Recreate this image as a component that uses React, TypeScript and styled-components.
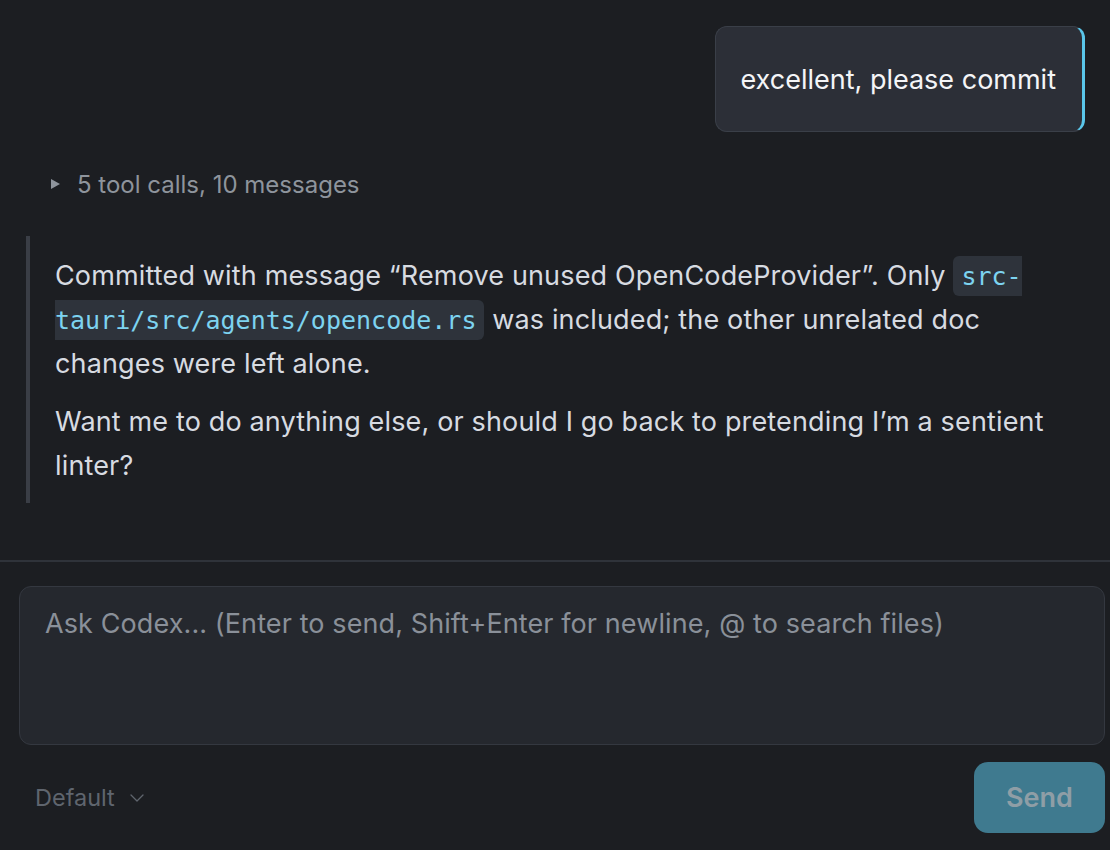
import React from 'react';
import styled, { createGlobalStyle } from 'styled-components';
import { ChevronDown } from 'lucide-react';

const GlobalStyle = createGlobalStyle`
  html, body { margin: 0; padding: 0; background: #1c1e22; }
  body { font-family: Inter, "Noto Sans", "Liberation Sans", sans-serif; }
  * { box-sizing: border-box; }
`;

const Page = styled.div`
  height: 850px;
  display: flex;
  flex-direction: column;
  background: #1c1e22;
  overflow: hidden;
`;

const Messages = styled.div`
  flex: 1;
  display: flex;
  flex-direction: column;
  padding: 26px 25px 0 26px;
`;

const UserBubble = styled.div`
  align-self: flex-end;
  background: #2c2f37;
  border: 1px solid #3a3f48;
  border-right: 3px solid #5ac6ea;
  border-radius: 12px;
  padding: 0 26px 0 24px;
  height: 106px;
  display: flex;
  align-items: center;
  color: #f4f5f7;
  font-size: 27px;
`;

const ToolCalls = styled.div`
  margin-top: 37px;
  padding-left: 25px;
  display: flex;
  align-items: center;
  gap: 17px;
  color: #8e949c;
  font-size: 24px;
  height: 30px;
`;

const Triangle = styled.span`
  width: 0;
  height: 0;
  border-top: 5.5px solid transparent;
  border-bottom: 5.5px solid transparent;
  border-left: 9px solid #8e949c;
`;

const AssistantBlock = styled.div`
  margin-top: 37px;
  border-left: 4px solid #3a3e46;
  padding: 18px 30px 15px 25px;
  color: #d7dbe1;
  font-size: 27px;
  line-height: 44px;
  letter-spacing: 0.15px;
`;

const Para = styled.p`
  margin: 0;
  & + & { margin-top: 14px; }
`;

const Code = styled.code`
  font-family: "DejaVu Sans Mono", "Liberation Mono", monospace;
  font-size: 25px;
  line-height: 1;
  letter-spacing: 0;
  color: #7dd3f0;
  background: #2e333b;
  border-radius: 6px;
  padding: 6px 8px 5px;
`;

const Divider = styled.div`
  height: 2px;
  background: #2f333a;
`;

const Composer = styled.div`
  padding: 24px 5px 17px 19px;
  display: flex;
  flex-direction: column;
`;

const InputBox = styled.div`
  height: 159px;
  background: #25282e;
  border: 1px solid #343840;
  border-radius: 12px;
  padding: 20px 25px;
  color: #8a9099;
  font-size: 27px;
  letter-spacing: 0.1px;
`;

const Footer = styled.div`
  margin-top: 17px;
  display: flex;
  align-items: center;
  justify-content: space-between;
  padding-left: 16px;
`;

const ModeSelect = styled.div`
  display: flex;
  align-items: center;
  gap: 10px;
  color: #5f656e;
  font-size: 23.5px;
`;

const SendButton = styled.button`
  width: 131px;
  height: 71px;
  border: none;
  border-radius: 14px;
  background: #3f7a8f;
  color: #8f9ea6;
  font-family: inherit;
  font-size: 27px;
  font-weight: 600;
`;

const App: React.FC = () => (
  <Page>
    <GlobalStyle />
    <Messages>
      <UserBubble>excellent, please commit</UserBubble>
      <ToolCalls>
        <Triangle />
        <span>5 tool calls, 10 messages</span>
      </ToolCalls>
      <AssistantBlock>
        <Para>
          Committed with message “Remove unused OpenCodeProvider”. Only{' '}
          <Code>src-tauri/src/agents/opencode.rs</Code> was included; the other unrelated doc changes were left
          alone.
        </Para>
        <Para>Want me to do anything else, or should I go back to pretending I’m a sentient linter?</Para>
      </AssistantBlock>
    </Messages>
    <Divider />
    <Composer>
      <InputBox>Ask Codex... (Enter to send, Shift+Enter for newline, @ to search files)</InputBox>
      <Footer>
        <ModeSelect>
          Default
          <ChevronDown size={24} strokeWidth={1.3} />
        </ModeSelect>
        <SendButton>Send</SendButton>
      </Footer>
    </Composer>
  </Page>
);

export default App;
